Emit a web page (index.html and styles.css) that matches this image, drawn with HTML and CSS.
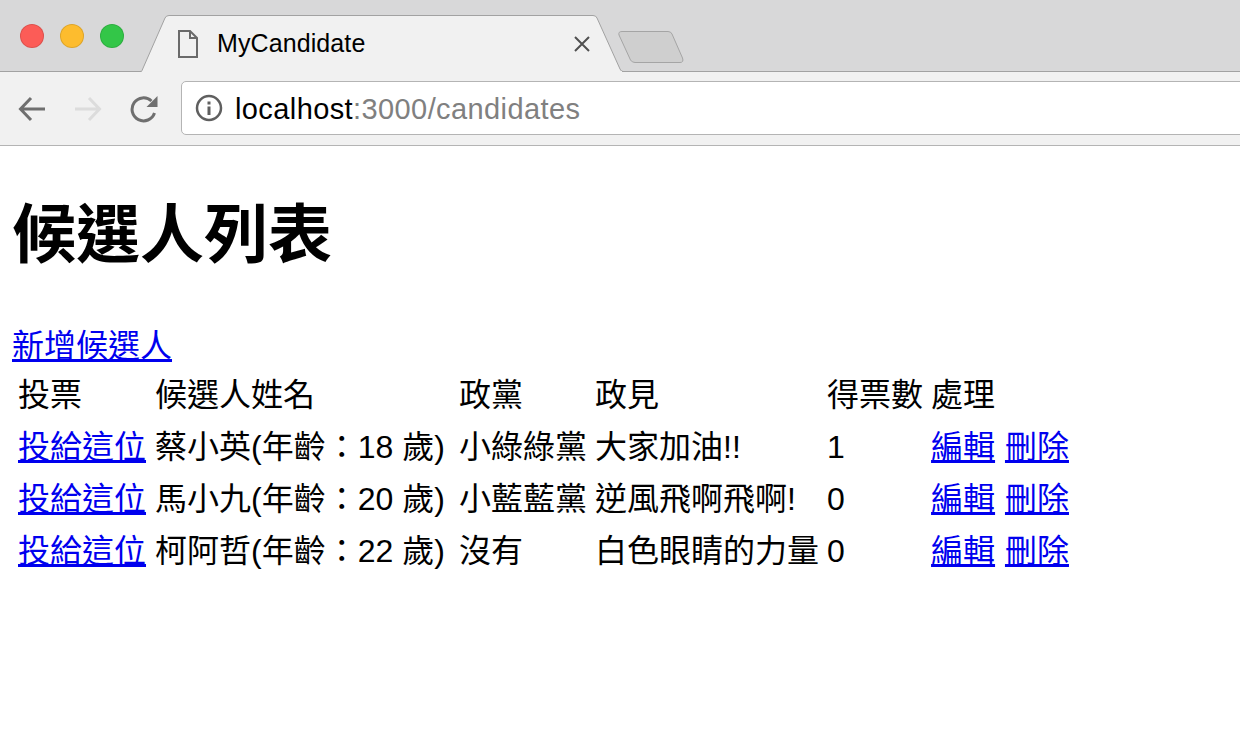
FILE: index.html
```html
<!DOCTYPE html>
<html lang="zh-Hant">
<head>
<meta charset="utf-8">
<title>MyCandidate</title>
<link rel="stylesheet" href="styles.css">
</head>
<body>
<header class="browser">
  <div class="strip">
    <div class="lights">
      <span class="light red"></span>
      <span class="light yellow"></span>
      <span class="light green"></span>
    </div>
    <div class="tab">
      <svg class="tab-shape" width="484" height="57" viewBox="0 0 484 57"><path d="M0 56.500Q1.500 56.500 2 55.500L25 3Q26 .5 29 .5H453Q456 .5 457 3L480 54Q481 56.500 483 56.500H484" fill="#f1f1f1" stroke="#a2a2a2" stroke-width="1"/><path d="M2 56H482V58H2Z" fill="#f1f1f1"/></svg>
      <svg class="doc-icon" width="20" height="28" viewBox="0 0 20 28"><path d="M1 1H12L19 8V27H1ZM12 1V8H19" fill="none" stroke="#6a6a6a" stroke-width="2"/></svg>
      <span class="tab-title">MyCandidate</span>
      <svg class="close-icon" width="16" height="16" viewBox="0 0 16 16"><path d="M1 1L15 15M15 1L1 15" stroke="#505050" stroke-width="2"/></svg>
    </div>
    <svg class="new-tab" width="66" height="32" viewBox="0 0 66 32"><path d="M4 .5H50Q53 .5 54 3L64.500 27Q66 31.500 62 31.500H17Q14 31.500 12.500 29L1 4Q0 .5 4 .5Z" fill="#cfcfcf" stroke="#a5a5a5" stroke-width="1"/></svg>
  </div>
  <div class="toolbar">
    <svg class="nav-icon" width="28" height="26" viewBox="0 0 28 26"><path d="M27 13H3M13 2L2.500 13L13 24" fill="none" stroke="#6f6f6f" stroke-width="3"/></svg>
    <svg class="nav-icon" width="28" height="26" viewBox="0 0 28 26"><path d="M1 13H25M15 2L25.500 13L15 24" fill="none" stroke="#dcdcdc" stroke-width="3"/></svg>
    <svg class="nav-icon" width="28" height="28" viewBox="0 0 28 28"><path d="M24.500 18A11.500 11.500 0 1 1 21.500 6" fill="none" stroke="#6f6f6f" stroke-width="3"/><path d="M27.500 1V12H16.500Z" fill="#6f6f6f"/></svg>
    <div class="omnibox">
      <svg class="info-icon" width="28" height="28" viewBox="0 0 28 28"><circle cx="14" cy="14" r="12" fill="none" stroke="#5f5f5f" stroke-width="2.500"/><path d="M12.500 7.500H15.500V10.500H12.500ZM12.500 12.500H15.500V21H12.500Z" fill="#5f5f5f"/></svg>
      <span class="url"><span class="host">localhost</span>:3000/candidates</span>
    </div>
  </div>
</header>
<main class="page">
  <h1 class="title">候選人列表</h1>
  <a class="add-link" href="#">新增候選人</a>
  <table class="candidates">
    <thead>
      <tr>
        <th class="c-vote">投票</th>
        <th class="c-name">候選人姓名</th>
        <th class="c-party">政黨</th>
        <th class="c-policy">政見</th>
        <th class="c-count">得票數</th>
        <th class="c-actions">處理</th>
      </tr>
    </thead>
    <tbody>
      <tr>
        <td><a href="#">投給這位</a></td>
        <td>蔡小英(年齡：18 歲)</td>
        <td>小綠綠黨</td>
        <td>大家加油!!</td>
        <td>1</td>
        <td><a href="#">編輯</a> <a class="delete" href="#">刪除</a></td>
      </tr>
      <tr>
        <td><a href="#">投給這位</a></td>
        <td>馬小九(年齡：20 歲)</td>
        <td>小藍藍黨</td>
        <td>逆風飛啊飛啊!</td>
        <td>0</td>
        <td><a href="#">編輯</a> <a class="delete" href="#">刪除</a></td>
      </tr>
      <tr>
        <td><a href="#">投給這位</a></td>
        <td>柯阿哲(年齡：22 歲)</td>
        <td>沒有</td>
        <td>白色眼睛的力量</td>
        <td>0</td>
        <td><a href="#">編輯</a> <a class="delete" href="#">刪除</a></td>
      </tr>
    </tbody>
  </table>
</main>
</body>
</html>
```
FILE: styles.css
```css
* {
  box-sizing: border-box;
}

html,
body {
  margin: 0;
  height: 100%;
  overflow: hidden;
  background: #fff;
}

body {
  font-family: "Liberation Sans", "Noto Sans CJK TC", sans-serif;
  color: #000;
}

.browser {
  display: flex;
  flex-direction: column;
  height: 146px;
}

.strip {
  display: flex;
  align-items: flex-start;
  height: 72px;
  background: #d8d8d9;
  border-bottom: 1px solid #a2a2a2;
  padding: 0 0 0 20px;
}

.lights {
  display: flex;
  gap: 16px;
  margin-top: 24px;
}

.light {
  width: 24px;
  height: 24px;
  border-radius: 50%;
  border: 1px solid rgba(0, 0, 0, 0.12);
}

.red {
  background: #fc5c57;
}

.yellow {
  background: #fdbc2e;
}

.green {
  background: #33c648;
}

.tab {
  position: relative;
  display: flex;
  align-items: center;
  width: 484px;
  height: 57px;
  margin: 15px 0 0 16px;
  padding: 1px 34px 1px 38px;
}

.tab-shape {
  position: absolute;
  left: 0;
  top: 0;
  overflow: visible;
}

.doc-icon,
.tab-title,
.close-icon {
  position: relative;
}

.tab-title {
  margin-left: 19px;
  font-size: 25px;
  letter-spacing: 0.1px;
  flex: 1;
}

.new-tab {
  margin: 31px 0 0 -6px;
}

.toolbar {
  display: flex;
  align-items: center;
  height: 74px;
  padding: 0 0 0 18px;
  gap: 28px;
  background: #f1f1f1;
  border-bottom: 1px solid #b4b4b4;
  overflow: hidden;
}

.omnibox {
  display: flex;
  align-items: center;
  gap: 12px;
  flex: 1;
  height: 54px;
  margin: 0 -10px 2px -5px;
  padding-left: 13px;
  background: #fff;
  border: 1px solid #b4b4b4;
  border-radius: 5px;
}

.url {
  padding-top: 3px;
  font-size: 29px;
  letter-spacing: 0.4px;
  color: #808080;
}

.host {
  color: #000;
}

.page {
  padding: 50px 0 0 12px;
}

.title {
  margin: 0;
  font-size: 64px;
  line-height: 78px;
  font-weight: 700;
}

.add-link {
  display: block;
  margin-top: 52px;
  width: max-content;
  font-size: 32px;
  line-height: 40px;
}

a {
  color: #00e;
  text-decoration: underline;
}

.candidates {
  border-collapse: separate;
  border-spacing: 3px 4px;
  font-size: 32px;
  line-height: 42px;
  margin-top: 1px;
}

.candidates th,
.candidates td {
  padding: 3px 2px 3px 3px;
  text-align: left;
  font-weight: 400;
  white-space: nowrap;
}

.c-vote {
  width: 134px;
}

.c-name {
  width: 301px;
}

.c-party {
  width: 133px;
}

.c-policy {
  width: 229px;
}

.c-count {
  width: 101px;
}

.c-actions {
  width: 144px;
}

.delete {
  margin-left: 1px;
}
```
